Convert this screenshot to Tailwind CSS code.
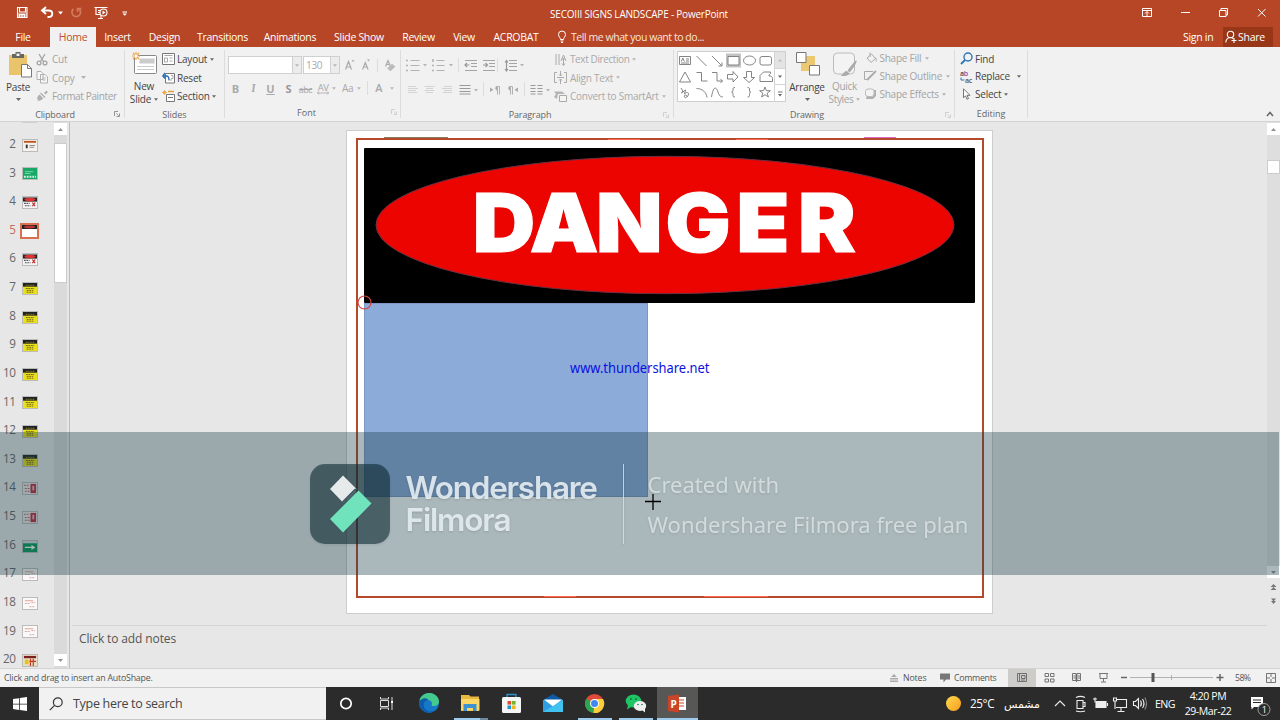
<!DOCTYPE html>
<html lang="en">
<head>
<meta charset="utf-8">
<title>SECOIII SIGNS LANDSCAPE - PowerPoint</title>
<script src="https://cdn.jsdelivr.net/npm/@tailwindcss/browser@4"></script>
</head>
<body class="w-[1280px] h-[720px] overflow-hidden bg-[#e7e7e7] font-['Open_Sans','Noto_Sans',sans-serif] text-[10px] text-[#444] leading-none whitespace-nowrap">
<svg width="0" height="0" class="absolute">
  <defs>
    <symbol id="dn" viewBox="0 0 5 3"><path d="M0 0h5L2.500 3z" fill="currentColor" fill-opacity=".8"/></symbol>
    <symbol id="launch" viewBox="0 0 6 6"><path d="M.5 5V.5H4M2.500 2.500l2 2M5.500 2.500v3h-3" fill="none" stroke="currentColor" stroke-width=".9"/></symbol>
  </defs>
</svg>
<div class="relative flex flex-col w-[1280px] h-[720px]">

  <!-- Title bar -->
  <header class="h-[27px] shrink-0 bg-[#b64626] text-white flex items-center">
    <svg class="w-[140px] h-[27px]" viewBox="0 0 140 27" fill="none" stroke="#fff" stroke-width="1.100">
      <path d="M17.500 7.500h9.500v10h-9.500zM19.500 7.500v4.500h6v-4.500M19.500 17.500v-3h5v3M22 15v2.500"/><path d="M17.500 13h9.500v4.500h-9.500z" stroke="none" fill="#fff" fill-opacity=".45"/>
      <path d="M42.500 10.500h6c5 0 5 6.500 0 6.500h-1M46 7l-4 3.500 4 3.500" stroke-width="1.900"/>
      <path d="M58 11.500h5l-2.500 3z" fill="#fff" stroke="none"/>
      <path d="M73.500 9a4.300 4.300 0 1 0 5.500 0M77.500 12V8.500h4" stroke="#d17a5f" stroke-width="1.700"/>
      <path d="M94.500 7.500h13M96 8v6.500h5M98 10.500h3M98 12.500h2M101 15v3M98 18.500h5"/><circle cx="103.500" cy="12.500" r="3.500"/><path d="M102.500 10.500l3 2-3 2z" fill="#fff" stroke="none"/>
      <path d="M122.500 12h4.500"/><path d="M122.500 13.500h4.500l-2.250 2.300z" fill="#fff" stroke="none"/>
    </svg>
    <div class="w-[998px] text-center text-[10px] tracking-[-0.210px] pt-px">SECOIII SIGNS LANDSCAPE - PowerPoint</div>
    <svg class="w-[142px] h-[27px]" viewBox="1138 0 142 27" fill="none" stroke="#fff" stroke-width="1">
      <path d="M1142.500 8.500h9v8h-9zM1142.500 10.500h9M1147 16v-4M1145 13.500l2-2 2 2"/>
      <path d="M1181 12.500h9"/>
      <path d="M1219.500 10.500h6.500v6h-6.500zM1221 10V8.500h6.500v6.500h-1.500"/>
      <path d="M1258 9l7.500 7.500M1265.500 9l-7.500 7.500"/>
    </svg>
  </header>

  <!-- Ribbon tabs -->
  <nav class="h-[20px] shrink-0 bg-[#b64626] text-white flex items-center text-[10.500px] tracking-[-0.300px]">
    <span class="w-[50px] text-center pr-1">File</span>
    <span class="w-[46px] h-full bg-[#f1f1f1] text-[#c0502f] flex items-center justify-center">Home</span>
    <span class="w-[43px] text-center">Insert</span>
    <span class="w-[51px] text-center">Design</span>
    <span class="w-[65px] text-center">Transitions</span>
    <span class="w-[70px] text-center">Animations</span>
    <span class="w-[68px] text-center">Slide Show</span>
    <span class="w-[51px] text-center">Review</span>
    <span class="w-[40px] text-center">View</span>
    <span class="w-[64px] text-center">ACROBAT</span>
    <svg class="w-[10px] h-[14px] ml-[9px]" viewBox="0 0 10 14" fill="none" stroke="#fff"><path d="M3.500 9.500C3.500 7.500 1.500 7 1.500 4.500a3.500 3.500 0 0 1 7 0c0 2.500-2 3-2 5zM3.500 11h3M4 12.500h2"/></svg>
    <span class="ml-[4px] w-[595px] text-[#fbe4dc] tracking-[-0.440px]">Tell me what you want to do...</span>
    <span class="w-[48px] ml-[17px]">Sign in</span>
    <span class="h-full w-[50px] bg-[#983618] flex items-center pl-[2px] gap-[1px] -ml-[8px] mr-[5px] text-[10.500px] tracking-[-0.250px]">
      <svg class="w-[12px] h-[14px] shrink-0" viewBox="0 0 12 14" fill="none" stroke="#fff" stroke-width="1.100"><circle cx="5.500" cy="4.500" r="3.200"/><path d="M.8 12.500c0-3 2-5 4.700-5 1 0 2 .4 2.700 1M9 8v5M6.500 10.500h5"/></svg>
      Share</span>
  </nav>

  <!-- Ribbon -->
  <section class="h-[75px] shrink-0 bg-[#f1f1f1] border-b border-[#d2d2d2] flex relative">
    <!-- Clipboard -->
    <div class="w-[125px] border-r border-[#dcdcdc] my-[3px] flex flex-col">
      <div class="flex h-[56px]">
        <div class="w-[36px] flex flex-col items-center">
          <svg class="w-[26px] h-[28px] ml-[4px] mt-[1px]" viewBox="0 0 26 28"><path d="M2 4h18v20H2z" fill="#e9c46a"/><path d="M5 3h3.500V1h5v2H17v4H5z" fill="#666"/><path d="M9.500 2.500h3V5h-3z" fill="#f1f1f1"/><path d="M14.500 13.500h6l4 4v8.500h-10z" fill="#fff" stroke="#777"/><path d="M20.500 13.500v4h4" fill="none" stroke="#777"/></svg>
          <span class="mt-[3px] tracking-[-0.300px]">Paste</span>
          <svg class="w-[5px] h-[3px] mt-[6px]"><use href="#dn"/></svg>
        </div>
        <div class="flex flex-col text-[#a3a3a3]">
          <div class="flex h-[18.500px] items-center gap-[4px] tracking-[-0.200px]"><svg class="w-[12px] h-[13px]" viewBox="0 0 12 13" fill="none" stroke="#a3a3a3" stroke-width="1.300"><path d="M3 1l4.500 7.500M9 1L4.500 8.500"/><circle cx="3" cy="10" r="1.900"/><circle cx="9" cy="10" r="1.900"/></svg>Cut</div>
          <div class="flex h-[18.500px] items-center gap-[4px] tracking-[-0.200px]"><svg class="w-[12px] h-[13px]" viewBox="0 0 12 13" fill="#f8f8f8" stroke="#b0b0b0"><path d="M1 .5h4l2 2v6H1zM4.500 3.500H9l2.500 2.500v6h-7zM6.500 7h3M6.500 9h3"/></svg>Copy<svg class="w-[5px] h-[3px] ml-[2px]"><use href="#dn"/></svg></div>
          <div class="flex h-[18.500px] items-center gap-[4px] tracking-[-0.360px]"><svg class="w-[12px] h-[12px]" viewBox="0 0 12 12" fill="#b0b0b0"><path d="M8 3l2.500-2.500L12 2 9.500 4.500zM5 2.500L9.500 7 8.500 8 4 3.500zM3.500 4.500l3.700 3.700C6 10 4 11 1.500 11L2.500 9 1 9.500C1 7.500 2 5.500 3.500 4.500z"/></svg>Format Painter</div>
        </div>
      </div>
      <div class="flex items-center h-[17px] pt-[4px] text-[9px] text-[#666]"><span class="w-[110px] text-center tracking-[-0.120px]">Clipboard</span><svg class="w-[6px] h-[6px] ml-[4px] text-[#888]"><use href="#launch"/></svg></div>
    </div>
    <!-- Slides -->
    <div class="w-[100px] border-r border-[#dcdcdc] my-[3px] flex flex-col">
      <div class="flex h-[56px]">
        <div class="w-[38px] flex flex-col items-center leading-[13px]">
          <svg class="w-[27px] h-[25px] mt-px" viewBox="0 0 27 25"><rect x="3.500" y="4.500" width="22" height="18" rx="1" fill="#fff" stroke="#888"/><path d="M9 8h14v4H9zM6 15.500h17M6 18.500h17" fill="#ccc" stroke="#ccc" stroke-width="1.200"/><path d="M5 1v8M1 5h8M2 2l6 6M8 2L2 8" stroke="#e8a33c" stroke-width="1.200"/><circle cx="5" cy="5" r="1.700" fill="#fff"/></svg>
          <span class="mt-[4px] tracking-[-0.200px]">New</span>
          <span class="flex items-center gap-[3px] tracking-[-0.200px]">Slide<svg class="w-[4px] h-[3px]"><use href="#dn"/></svg></span>
        </div>
        <div class="flex flex-col tracking-[-0.220px] -ml-px">
          <div class="flex h-[18.500px] items-center gap-[2px]"><svg class="w-[13px] h-[12px]" viewBox="0 0 13 12" fill="#fff" stroke="#777"><path d="M.5.500h12v11H.500z"/><path d="M2.500 2.500h8M2.500 5h3v4h-3zM7.500 5h3M7.500 8h3" stroke="#aaa"/></svg>Layout<svg class="w-[4px] h-[3px] ml-px"><use href="#dn"/></svg></div>
          <div class="flex h-[18.500px] items-center gap-[2px]"><svg class="w-[13px] h-[12px]" viewBox="0 0 13 12" fill="#fff" stroke="#777"><path d="M3.500 1.500h9v9.500h-9z"/><path d="M6 8h4M9 3.500h2v3H9" stroke="#aaa"/><path d="M1 4h3.500c2 0 2.500 2 2.500 4M3 1L.8 4 3 6.500" fill="none" stroke="#2b6cb0" stroke-width="1.300"/></svg>Reset</div>
          <div class="flex h-[18.500px] items-center gap-[2px]"><svg class="w-[13px] h-[12px]" viewBox="0 0 13 12" fill="#fff" stroke="#777"><path d="M4.500 4.500h8v7h-8zM6 7.500h5"/><path d="M6 1.500h6" stroke="#e0a23c" stroke-width="1.500"/><path d="M2.500 0v5M0 2.500h5M1 1l3 3M4 1L1 4" stroke="#e8a33c" stroke-width=".8"/></svg>Section<svg class="w-[4px] h-[3px]"><use href="#dn"/></svg></div>
        </div>
      </div>
      <div class="h-[17px] pt-[4px] flex items-center justify-center text-[9px] text-[#666]">Slides</div>
    </div>
    <!-- Font -->
    <div class="w-[176px] border-r border-[#dcdcdc] my-[3px] flex flex-col text-[#a9a9a9]">
      <div class="flex h-[31px] pt-[2px] items-center pl-[3px]">
        <div class="w-[65px] h-[18px] bg-white border border-[#d0d0d0]"></div>
        <div class="w-[9px] h-[18px] bg-[#ececec] border-y border-r border-[#d0d0d0] flex items-center justify-center"><svg class="w-[4px] h-[3px]"><use href="#dn"/></svg></div>
        <div class="w-[28px] h-[18px] bg-white border border-[#d0d0d0] ml-px pl-[2px] flex items-center text-[10px] tracking-[-0.300px]">130</div>
        <div class="w-[9px] h-[18px] bg-[#ececec] border-y border-r border-[#d0d0d0] flex items-center justify-center"><svg class="w-[4px] h-[3px]"><use href="#dn"/></svg></div>
        <svg class="w-[56px] h-[20px] ml-px" viewBox="341 0 56 20" fill="none" stroke="#aaa" stroke-width="1.200"><path d="M345.500 14.500l3-8 3 8M346.500 12h4M362.500 14.500l2.800-7 2.800 7M363.500 12h3.700M385.500 11.500l2.500-6 2.500 6M386.500 9.500h3"/><path d="M351.500 6.500l1.500-2 1.500 2zM367 4.500h3l-1.500 2z" fill="#aaa" stroke="none"/><path d="M388 13.500l4-4 2.500 2-4 4z" fill="#bbb" stroke="#bbb"/><path d="M377.500 4v13" stroke="#ddd"/></svg>
      </div>
      <div class="flex h-[25px] items-start pt-[3px] text-[11px]">
        <b class="w-[21px] text-center pt-px">B</b><i class="w-[15px] text-center font-serif font-bold pt-px">I</i><span class="w-[19px] text-center font-bold underline pt-px">U</span><b class="w-[17px] text-center pt-px text-[#999]">S</b><span class="w-[17px] text-center text-[9px] tracking-[-0.500px] line-through pt-[3px]">abc</span><span class="w-[18px] flex flex-col items-center text-[9.500px] tracking-[-0.500px] pt-px">AV<svg class="w-[12px] h-[4px] -mt-px" viewBox="0 0 12 4" fill="none" stroke="#aaa" stroke-width=".8"><path d="M0 2h12M2 .5L.5 2 2 3.500M10 .5L11.500 2 10 3.500"/></svg></span><svg class="w-[4px] h-[3px] mt-[5px]"><use href="#dn"/></svg><span class="w-[21px] text-center text-[10px] tracking-[-0.400px] pl-[2px] pt-px">Aa</span><svg class="w-[4px] h-[3px] mt-[5px]"><use href="#dn"/></svg><span class="w-px h-[14px] bg-[#ddd] ml-[6px] -mt-px"></span><span class="w-[22px] text-center font-semibold">A</span><svg class="w-[4px] h-[3px] mt-[5px]"><use href="#dn"/></svg>
      </div>
      <div class="flex items-center h-[17px] pt-[4px] text-[9px] text-[#666]"><span class="w-[163px] text-center">Font</span><svg class="w-[6px] h-[6px] ml-[3px] text-[#ccc]"><use href="#launch"/></svg></div>
    </div>
    <!-- Paragraph -->
    <div class="w-[273px] border-r border-[#dcdcdc] my-[3px] flex flex-col text-[#a9a9a9]">
      <div class="flex h-[56px]">
        <svg class="w-[153px] h-[56px] shrink-0" viewBox="401 50 153 56" fill="none" stroke="#b2b2b2" stroke-width="1">
          <path d="M410.500 60.500h9M410.500 65.500h9M410.500 70.500h9M436.500 60.500h8M436.500 65.500h8M436.500 70.500h8"/><path d="M406 60.500h2M406 65.500h2M406 70.500h2M433 59v3M432 65.500h2M432 70.500h2" stroke-width="1.600"/>
          <path d="M458.500 58v14M497.500 58v14M483.500 82v14M524.500 82v14" stroke="#ddd"/>
          <path d="M465 60.500h12M471 63.500h6M471 66.500h6M465 70.500h12M483 60.500h12M489 63.500h6M489 66.500h6M483 70.500h12M509 60.500h8M509 63.500h8M509 66.500h8M509 70.500h8" stroke="#a5a5a5"/><path d="M469.500 65H465M467 63l-2 2 2 2M483 65h4.500M485.500 63l2 2-2 2M506.500 61v10M505 62.500l1.500-2 1.500 2M505 69l1.500 2 1.500-2" stroke="#999" stroke-width="1.200"/>
          <path d="M408 86.500h8M408 88.500h10M408 90.500h8M408 92.500h9M424.500 86.500h10M426 88.500h7M424.500 90.500h10M426 92.500h7M444 86.500h8M442 88.500h10M444 90.500h8M443 92.500h9" stroke="#d3d3d3"/><path d="M459.500 85.500h11M459.500 88.500h11M459.500 91.500h11M459.500 94h11M530.500 85.500h5M537.500 85.500h5M530.500 88.500h5M537.500 88.500h5M530.500 91.500h5M537.500 91.500h5M530.500 94h5M537.500 94h5" stroke="#999"/>
          <path d="M490 87.500l3.500 2.200-3.500 2.200zM518 87.500l-3.500 2.200 3.500 2.200zM497.500 90.500a2.200 2.200 0 0 1 0-4.500zM510.500 90.500a2.200 2.200 0 0 1 0-4.500z" fill="#aaa" stroke="none"/><path d="M497.500 86v8.500M499.500 94.500V86.500h-3M510.500 86v8.500M512.500 94.500V86.500h-3"/>
          <g fill="#b5b5b5" stroke="none"><path d="M423 64h4l-2 2.500zM449 64h4l-2 2.500zM520 64h4l-2 2.500zM474 89h4l-2 2.500zM546 89h4l-2 2.500z"/></g>
        </svg>
        <div class="flex flex-col tracking-[-0.250px]">
          <div class="flex h-[18.500px] items-center gap-[3px] tracking-[-0.400px]"><svg class="w-[13px] h-[13px]" viewBox="0 0 13 13" fill="none" stroke="#aaa"><path d="M2 1v11M5 1v11M9.500 12V5M7 8l2.500-6L12 8M8 6h3M8 10.500l1.500 2 1.500-2"/></svg>Text Direction<svg class="w-[4px] h-[3px]"><use href="#dn"/></svg></div>
          <div class="flex h-[18.500px] items-center gap-[3px]"><svg class="w-[13px] h-[13px]" viewBox="0 0 13 13" fill="none" stroke="#aaa"><path d="M3 1.500H.5v10H3M10 1.500h2.500v10H10M3 6.500h7M6.500 0v5M6.500 8v5M5 3.500l1.500 1.500L8 3.500M5 9.500L6.500 8 8 9.500"/></svg>Align Text<svg class="w-[4px] h-[3px]"><use href="#dn"/></svg></div>
          <div class="flex h-[18.500px] items-center gap-[3px]"><svg class="w-[13px] h-[13px]" viewBox="0 0 13 13" fill="none" stroke="#aaa"><path d="M0 1.500h8l3 2.500H4L3 9 0 7l2-3z" fill="#b5b5b5" stroke="none"/><path d="M5.500 5.500h7v6h-7z" fill="#f4f4f4"/></svg>Convert to SmartArt<svg class="w-[4px] h-[3px]"><use href="#dn"/></svg></div>
        </div>
      </div>
      <div class="flex items-center h-[17px] pt-[4px] text-[9px] text-[#666]"><span class="w-[258px] text-center tracking-[-0.120px]">Paragraph</span><svg class="w-[6px] h-[6px] ml-[4px] text-[#ccc]"><use href="#launch"/></svg></div>
    </div>
    <!-- Drawing -->
    <div class="w-[281px] border-r border-[#dcdcdc] my-[3px] flex flex-col">
      <div class="flex h-[56px]">
        <svg class="w-[110px] h-[53px] ml-[3px] shrink-0" viewBox="677 50 110 53" fill="none" stroke="#777" stroke-width=".9">
          <path d="M677.500 51.500h108v50h-108z" fill="#fff" stroke="#c8c8c8"/><path d="M775 52h10v16h-10z" fill="#e4e4e4" stroke="none"/><path d="M774.500 52v50M775 68.500h10M775 84.500h10" stroke="#d0d0d0"/>
          <path d="M679.500 56.500h11v8h-11zM686 59h3M686 61h3M681 63h8M681.300 61.500l1.500-3.500 1.500 3.500"/>
          <path d="M696.500 56l10 10M712 56l9.500 9.500M722 62.500v3.500h-3.500"/>
          <path d="M726 53.500h15v14h-15z" fill="#c3c3c3" stroke="none"/><path d="M728 56.500h11v8.500h-11z" fill="#fff"/>
          <ellipse cx="749.500" cy="60.500" rx="6" ry="4.500"/><rect x="760" y="56.500" width="11.500" height="8.500" rx="2"/>
          <path d="M679.500 82l5.500-10 5.500 10zM696.500 72.500h5v8.500h6M712 72.500h5v8.500h5.500M720.500 79l2 2-2 2"/>
          <path d="M727.500 74.500h5.500v-3l5 5.500-5 5v-3h-5.500zM746.500 71.500h5v6h3l-5.500 5-5.500-5h3z"/>
          <path d="M760 81.500v-6l3.500-3.500h7c1 2-2 2-1.500 4 2 0 3.500.5 3.500 2.500v3z"/>
          <path d="M681 88l2 3-1.500 2 4-3-1 4c2-2 4-2 4 0s-3 5-4 3 2-3 3 0M696.500 88.500c6 0 10 4 10.500 9M711.500 97c2-12 5-10 6.500-5s4 5.500 5 4.500"/>
          <path d="M735 87.500c-2 0-2 .5-2 2.500s-.5 2-1.500 2.200c1 .2 1.500.3 1.500 2.300s0 2.500 2 2.500M747.500 87.500c2 0 2 .5 2 2.500s.5 2 1.500 2.200c-1 .2-1.500.3-1.500 2.300s0 2.500-2 2.500"/>
          <path d="M765 87l1.400 3.700h4l-3.200 2.500 1.200 3.800-3.400-2.300-3.400 2.300 1.200-3.800-3.200-2.500h4z"/>
          <path d="M778 61.500h4l-2-2.500z" fill="#bbb" stroke="none"/><path d="M778 75.500h4l-2 2.500zM778 94h4l-2 2.500z" fill="#666" stroke="none"/><path d="M778 92h4.500" stroke="#666"/>
        </svg>
        <div class="w-[40px] flex flex-col items-center">
          <svg class="w-[26px] h-[27px] mt-px" viewBox="0 0 26 27"><path d="M12 5h9v9h-9zM7 12h8v8H7z" fill="#ecc873"/><path d="M2.500 1.500h9.500v10h-9.500zM15.500 14.500H25.500v9.500h-10z" fill="#fff" stroke="#777"/></svg>
          <span class="mt-[4px] tracking-[-0.250px]">Arrange</span><svg class="w-[5px] h-[3px] mt-[6px]"><use href="#dn"/></svg>
        </div>
        <div class="w-[35px] flex flex-col items-center text-[#a3a3a3] leading-[13px]">
          <svg class="w-[26px] h-[26px] mt-px" viewBox="0 0 26 26"><rect x="1.500" y="2" width="21" height="21" rx="4" fill="#f3f3f3" stroke="#bbb"/><path d="M24.500 9.500c1 1-3 8-7 12l-2-2c3-4 8-11 9-10zM15 20l2.500 2.500c-2 3-5 2.500-9 2.500 3-1.500 3-5 6.500-5z" fill="#aaa"/></svg>
          <span class="mt-[3px] tracking-[-0.250px]">Quick</span><span class="flex items-center gap-[3px] tracking-[-0.350px]">Styles<svg class="w-[4px] h-[3px]"><use href="#dn"/></svg></span>
        </div>
        <div class="flex flex-col text-[#a3a3a3] pl-[2px] tracking-[-0.250px] -mt-px">
          <div class="flex h-[18px] items-center gap-[2.500px]"><svg class="w-[13px] h-[12px]" viewBox="0 0 13 12" fill="none" stroke="#aaa"><path d="M3 6l4.500-4 4 4.500-4.500 4zM6 5V.5M11.500 5.500c1 2 1 3 .5 4"/></svg>Shape Fill<svg class="w-[4px] h-[3px] ml-[1px]"><use href="#dn"/></svg></div>
          <div class="flex h-[18px] items-center gap-[2.500px]"><svg class="w-[13px] h-[12px]" viewBox="0 0 13 12" fill="none" stroke="#aaa"><path d="M9 1.500H.5v8H3"/><path d="M12 1L5 8l-2 2" stroke-width="1.800"/></svg>Shape Outline<svg class="w-[4px] h-[3px] ml-[1px]"><use href="#dn"/></svg></div>
          <div class="flex h-[18px] items-center gap-[2.500px]"><svg class="w-[13px] h-[12px]" viewBox="0 0 13 12"><path d="M4 2h8v6l-3 3H2z" fill="#b0b0b0"/><rect x="1.500" y="1" width="8.500" height="7.500" rx="2.500" fill="#f3f3f3" stroke="#bbb"/></svg>Shape Effects<svg class="w-[4px] h-[3px] ml-[1px]"><use href="#dn"/></svg></div>
        </div>
      </div>
      <div class="flex items-center h-[17px] pt-[4px] text-[9px] text-[#666]"><span class="w-[266px] text-center tracking-[-0.120px]">Drawing</span><svg class="w-[6px] h-[6px] ml-[5px] text-[#ccc]"><use href="#launch"/></svg></div>
    </div>
    <!-- Editing -->
    <div class="w-[73px] border-r border-[#dcdcdc] my-[3px] flex flex-col">
      <div class="flex flex-col h-[56px] pl-[5px] tracking-[-0.230px]">
        <div class="flex h-[17px] items-center gap-[2px]"><svg class="w-[13px] h-[13px]" viewBox="0 0 13 13" fill="none" stroke="#2e75b6"><circle cx="8" cy="5" r="4" stroke-width="1.400"/><path d="M5 8L1 12" stroke-width="1.800"/></svg>Find</div>
        <div class="flex h-[18px] items-center gap-[2px]"><svg class="w-[13px] h-[15px]" viewBox="0 0 13 15" font-weight="600" font-size="7"><text x="0" y="6.500" fill="#444">a<tspan fill="#8a4bb5">b</tspan></text><text x="5" y="13.500" fill="#555">ac</text><path d="M1 8.500v2.500h3.500" fill="none" stroke="#2e75b6"/></svg>Replace<svg class="w-[4px] h-[3px] ml-[5px]"><use href="#dn"/></svg></div>
        <div class="flex h-[18px] items-center gap-[2px]"><svg class="w-[13px] h-[12px]" viewBox="0 0 13 12" fill="#fff" stroke="#666" stroke-width=".9"><path d="M3.500.8v9l2-2 1.500 3.500 1.500-.7L7 7.300h3z"/></svg>Select<svg class="w-[4px] h-[3px] ml-px"><use href="#dn"/></svg></div>
      </div>
      <div class="h-[17px] pt-[6px] flex items-center justify-center text-[9px] text-[#666]">Editing</div>
    </div>
    <div class="flex-1 flex items-end justify-end pr-[6px] pb-[4px]"><svg class="w-[8px] h-[6px]" viewBox="0 0 8 6" fill="none" stroke="#666" stroke-width="1.500"><path d="M1 5l3-3.500L7 5"/></svg></div>
  </section>

  <!-- Workspace -->
  <main class="h-[546px] shrink-0 flex">
    <div class="w-[54px] h-full overflow-hidden flex flex-col">
      <div class="h-[9px] shrink-0 pl-[22px]"><div class="w-[15px] h-px bg-[#d0d0d0]"></div></div>
      <div id="thumbs" class="flex flex-col"></div>
    </div>
    <div class="w-[13px] h-full bg-[#dadada] flex flex-col justify-between">
      <div class="flex flex-col"><div class="h-[12px] mt-px bg-white flex items-center justify-center"><svg class="w-[5px] h-[3px] rotate-180 text-[#777]"><use href="#dn"/></svg></div><div class="h-[140px] mt-[8px] bg-white border border-[#ccc]"></div></div>
      <div class="h-[12px] mb-[2px] bg-white flex items-center justify-center"><svg class="w-[5px] h-[3px] text-[#777]"><use href="#dn"/></svg></div>
    </div>
    <div class="w-[3px] border-r border-[#bdbdbd]"></div>
    <div class="w-[1197px] flex flex-col">
      <div class="h-[503px] relative">
        <div class="absolute left-[276px] top-[8px] w-[647px] h-[484px] bg-white border border-[#cdcdcd]">
          <svg class="w-[645px] h-[482px]" viewBox="347 131 645 482">
            <rect x="357" y="139" width="626" height="458" fill="none" stroke="#b54a2a" stroke-width="2"/>
            <path d="M384 137.500h64" stroke="#8a7b62" stroke-width="1"/><path d="M608 139.500h32M736 139.500h32M544 596.500h32M704 596.500h64" stroke="#ff6a50" stroke-width="1"/><path d="M864 137.500h32" stroke="#d86ac0" stroke-width="1"/>
            <rect x="364" y="148" width="611" height="155" rx="1" fill="#000"/>
            <ellipse cx="665" cy="225" rx="289" ry="68.700" fill="#eb0400" stroke="#6b3040" stroke-width="1"/>
            <text transform="scale(1.060 1)" x="446 499.800 562.300 627.800 694.800 752.800" y="252.500" font-family="Inter, 'Liberation Sans', sans-serif" font-weight="900" font-size="81.500" fill="#fff" stroke="#fff" stroke-width="1.200">DANGER</text>
            <rect x="364.500" y="303.500" width="283" height="193" fill="#8cabd9" stroke="#7c98c2"/>
            <circle cx="364.500" cy="302.500" r="6.500" fill="none" stroke="#d2453c" stroke-width="1.200"/>
          </svg>
        </div>
      </div>
      <div class="flex-1 ml-[2px] border-t border-[#d4d4d4] pl-[7px] pt-[7px] text-[12px] tracking-[-0.120px] text-[#555]">Click to add notes</div>
    </div>
    <div class="w-[13px] h-full flex flex-col items-center text-[#777]">
      <div class="w-full h-[456px] bg-[#dedede] flex flex-col"><div class="h-[12px] mt-px bg-white flex items-center justify-center"><svg class="w-[5px] h-[3px] rotate-180"><use href="#dn"/></svg></div><div class="h-[14px] mt-[25px] bg-white border border-[#ccc]"></div><div class="h-[12px] mt-auto bg-white flex items-center justify-center"><svg class="w-[5px] h-[3px]"><use href="#dn"/></svg></div></div>
      <svg class="w-[7px] h-[24px] mt-[6px]" viewBox="0 0 7 24" fill="#777"><path d="M3.500 0L6.500 3h-6zM3.500 3L6.500 6h-6zM1 17h5l-2.500 3zM1 14.500h5l-2.500 3z"/></svg>
    </div>
  </main>

  <!-- Status bar -->
  <footer class="h-[19px] shrink-0 bg-[#f1f1f1] border-t border-[#d4d4d4] flex items-center text-[8.800px] text-[#555]">
    <span class="w-[889px] pl-[4px] tracking-[-0.200px]">Click and drag to insert an AutoShape.</span>
    <svg class="w-[10px] h-[10px]" viewBox="0 0 10 10" fill="#aaa"><path d="M5 1l3 3H2zM1 5h8v1.500H1zM1 7.500h8V9H1z"/></svg>
    <span class="w-[37px] pl-[4px] tracking-[-0.150px]">Notes</span>
    <svg class="w-[10px] h-[10px] ml-[4px]" viewBox="0 0 10 10" fill="#777"><path d="M0 .5h10v6H6L3.500 9.500V6.500H0z"/></svg>
    <span class="w-[58px] pl-[4px] tracking-[-0.300px]">Comments</span>
    <svg class="w-[272px] h-[18px]" viewBox="1008 669 272 18" fill="none" stroke="#666" stroke-width=".9">
      <path d="M1008 669h28v18h-28z" fill="#cdccc9" stroke="none"/>
      <path d="M1017.500 673.500h9v8h-9zM1019.500 674v7M1021.500 675.500h3.500v3h-3.500zM1021 680h4"/>
      <path d="M1045 673.500h3.500v3H1045zM1050.500 673.500h3.500v3h-3.500zM1045 679h3.500v3H1045zM1050.500 679h3.500v3h-3.500z"/>
      <path d="M1072.500 673.500h3.500v7h-3.500zM1077 673.500h3.500v7h-3.500zM1076.500 674v8M1073.500 676h2M1073.500 678h2M1078 676h2M1078 678h2"/>
      <path d="M1099 673.500h9M1100 674v4.500h7V674M1103.500 679v2.500M1101 682h5"/>
      <path d="M1121 677.500h6" stroke-width="1.500"/><path d="M1130 677.500h83M1171.500 675v5" stroke="#aaa"/><path d="M1151.500 673h3v9h-3z" fill="#555" stroke="none"/><path d="M1216.500 677.500h7M1220 674v7" stroke-width="1.500"/>
      <path d="M1266.500 673.500h9v9h-9zM1271 674v3M1271 679v3M1267 678h3M1272 678h3"/>
      <text x="1235" y="681" font-size="8.700" fill="#555" stroke="none" textLength="16">58%</text>
    </svg>
  </footer>

  <!-- Windows taskbar -->
  <div class="h-[33px] shrink-0 bg-[#2a2b2a] text-white flex">
    <div class="w-[39px] flex items-center justify-center"><svg class="w-[14px] h-[14px]" viewBox="0 0 14 14" fill="#fff"><path d="M0 2l6-.8v5.500H0zM6.800 1L14 0v6.700H6.800zM0 7.400h6v5.500L0 12zM6.800 7.400H14V14l-7.200-1z"/></svg></div>
    <div class="w-[287px] bg-[#f1f1f1] border-t border-b border-[#c8c8c8] flex items-center text-[#444]">
      <svg class="w-[14px] h-[14px] ml-[10px]" viewBox="0 0 14 14" fill="none" stroke="#333" stroke-width="1.200"><circle cx="8.800" cy="5.200" r="4.400"/><path d="M5.600 8.400L.8 13.200"/></svg>
      <span class="ml-[10px] pt-px text-[12.500px] tracking-[-0.300px]">Type here to search</span>
    </div>
    <svg class="w-[614px] h-[33px]" viewBox="326 687 614 33">
      <circle cx="346" cy="703.500" r="5.200" fill="none" stroke="#fff" stroke-width="1.700"/>
      <path d="M380.500 697v2h8v-2M380.500 710v-2h8v2M380.500 700.500h8v6h-8zM392 697v13" fill="none" stroke="#ddd" stroke-width="1"/><path d="M391 701h2v2h-2z" fill="#fff"/>
      <circle cx="429" cy="703" r="10" fill="#1679c8"/><path d="M419.500 700c2-6 8-8 13-6.500 5 1.600 7 6 6.400 9-.6 3-4 4-7.400 3.500 1.500-3-.5-6-3.500-6-4 0-6 3-8.500 0z" fill="#44ca8c"/><path d="M419 702c2-4 7-5 9.500-2-4 0-6 4-4 8 2 3.500 7 4.500 11 2-4 5-15 4-16.500-8z" fill="#0d5bab"/>
      <path d="M461 695h8l1.500 1.500H479V711h-18z" fill="#e9b93f"/><path d="M461 699h18.500v11.500H461z" fill="#fbd768"/><path d="M463.500 704h13v7h-3.500v-3h-6v3h-3.500z" fill="#3d93d1"/>
      <rect x="502" y="697" width="19" height="16" rx="1.500" fill="#f5f5f5"/><path d="M507 697v-2.500h9v2.500" fill="none" stroke="#2b93d3" stroke-width="1.300"/><path d="M507.500 701h3.600v3.600h-3.600z" fill="#e6492d"/><path d="M512 701h3.600v3.600H512z" fill="#71b52b"/><path d="M507.500 705.500h3.600v3.600h-3.600z" fill="#1c93d6"/><path d="M512 705.500h3.600v3.600H512z" fill="#f3b51e"/>
      <path d="M543 700l10-6 10 6v12h-20z" fill="#0d5aa7"/><path d="M543 700h20v12h-20z" fill="#2f9fe3"/><path d="M544 699.500h18l-9 7z" fill="#fff"/><path d="M543 712l20-12v12z" fill="#42c2f0"/>
      <circle cx="594.500" cy="703.500" r="9.500" fill="#e04a3a"/><path d="M594.500 703.500l-8.200-4.800a9.500 9.500 0 0 0 7 14.200l5-8z" fill="#2da652"/><path d="M594.500 703.500v-4.500h8.500a9.500 9.500 0 0 1-9.500 14z" fill="#fccf3a"/><circle cx="594.500" cy="703.500" r="4.500" fill="#fff"/><circle cx="594.500" cy="703.500" r="3.500" fill="#4286f0"/>
      <ellipse cx="633.500" cy="701" rx="7.800" ry="6.500" fill="#1fc464"/><path d="M628 705l-1 4.500 5-3z" fill="#1fc464"/><ellipse cx="640" cy="706" rx="6.200" ry="5" fill="#efefef"/><path d="M642 710l3 2.500v-4z" fill="#efefef"/><g fill="#167c40"><circle cx="631" cy="699" r="1"/><circle cx="636" cy="699" r="1"/><circle cx="638" cy="704.500" r=".8"/><circle cx="642" cy="704.500" r=".8"/></g>
      <path d="M657 687h41v33h-41z" fill="#575756"/><path d="M676 697h10v13h-10z" fill="#fff"/><path d="M679 700h5M679 703h5M679 706h5" stroke="#c84627" stroke-width="1.200"/><path d="M668 696l11-1.500v18l-11-1.500z" fill="#c84627"/><text x="670.500" y="707.500" font-size="10" font-weight="700" fill="#fff">P</text>
      <path d="M454 718h26v2h-26zM578 718h34v2h-34zM619 718h34v2h-34zM657 718h41v2h-41z" fill="#9ccbee"/><path d="M480 718h8v2h-8z" fill="#6d8ba0"/>
    </svg>
    <div class="flex items-center w-[340px] text-[11.700px]">
      <div class="w-[15px] h-[15px] rounded-full bg-linear-to-br from-[#ffdb4d] to-[#f79a1c] ml-[6px]"></div>
      <span class="ml-[9px] w-[26px] pt-px tracking-[-0.400px]">25°C</span>
      <span class="ml-[6px] w-[38px] pt-px text-[11px] font-['DejaVu_Sans',sans-serif]" dir="rtl">مشمس</span>
      <svg class="w-[96px] h-[33px] ml-[13px]" viewBox="1053 687 96 33" fill="none" stroke="#eee" stroke-width="1.100">
        <path d="M1055 706l5-5 5 5"/>
        <path d="M1077 700.500h6v8h-6zM1083 702.500h2v4h-2M1076 697.500c3-1.500 6-1.500 9 0M1076 711c3 1 6 1 9 0"/>
        <path d="M1096 701.500h10v6h-10z" fill="#eee"/><path d="M1093 699h4M1095 697.500v5M1107.500 703v3"/>
        <path d="M1116 699.500h10.500v8H1116M1121 708v3M1117.500 711.500h7M1113.500 698h3v3h-3zM1115 701v8"/>
        <path d="M1133.500 701.500h2l3-3v10l-3-3h-2zM1140.500 700.500c1.200 2 1.200 4 0 6M1142.500 699c2 3 2 6 0 9" /><path d="M1144.800 697.500c2.300 4 2.300 8 0 12" stroke="#888"/>
      </svg>
      <span class="ml-[6px] w-[22px] pt-px text-[10.700px] tracking-[-0.650px]">ENG</span>
      <div class="w-[62px] text-center text-[10.500px] leading-[14.500px] tracking-[-0.400px]">4:20 PM<br>29-Mar-22</div>
      <svg class="w-[24px] h-[33px] ml-[12px]" viewBox="1247 687 24 33"><path d="M1247 697h12v10h-9l-2.500 2.500V707h-.5z" fill="#fff"/><path d="M1249 700h8M1249 702.500h8" stroke="#2a2b2a"/><circle cx="1260" cy="709.500" r="6" fill="#2a2b2a" stroke="#aaa" stroke-width=".9"/><text x="1257.700" y="713" font-size="9" fill="#fff">1</text></svg>
    </div>
  </div>

  <!-- Video watermark band -->
  <div class="absolute left-0 top-[432px] w-[1279px] h-[143px] bg-[#193c44]/[0.365]">
    <svg class="w-full h-full drop-shadow-[0_1px_1px_rgba(0,0,0,0.15)]" viewBox="0 432 1279 143">
      <rect x="310" y="464" width="80" height="80" rx="15" fill="#0a2833" fill-opacity=".57"/>
      <path d="M343 475.500l13.500 13.500L343 502.500 330 489z" fill="#e6eaeb"/><path d="M358.500 490.500l13 13L343 532.500 330 519z" fill="#70e3bd"/>
      <path d="M343 502.500v-1l12-12h2.500" fill="none" stroke="#35525d" stroke-width="1.500"/>
      <g font-family="Inter, sans-serif" font-weight="600" font-size="31.500" fill="#e3ecf1" fill-opacity=".92"><text x="405.500" y="499" textLength="192.500">Wondershare</text><text x="405.500" y="531" textLength="106">Filmora</text></g>
      <path d="M623.500 464v80" stroke="#dfe5e6" stroke-opacity=".8"/>
      <g font-family="'Noto Sans', sans-serif" font-size="22.500" fill="#e4ebec" fill-opacity=".72"><text x="647.500" y="493" textLength="131.500" lengthAdjust="spacingAndGlyphs">Created with</text><text x="647.500" y="533" textLength="321" lengthAdjust="spacingAndGlyphs">Wondershare Filmora free plan</text></g>
    </svg>
  </div>
  <svg class="absolute left-[644px] top-[493px] w-[18px] h-[18px]" viewBox="0 0 18 18" stroke="#000" stroke-width="1.300"><path d="M9 1v16M1 8.500h16"/></svg>
  <svg class="absolute left-[550px] top-[345px] w-[180px] h-[46px]" viewBox="550 345 180 46"><text x="570" y="372.500" font-family="'Noto Sans',sans-serif" font-size="13.700" fill="#0a10e0" textLength="139.500" lengthAdjust="spacingAndGlyphs">www.thundershare.net</text></svg>
</div>
<script>
// Slide thumbnails: background and inner marks for each slide number
const yellow = '<rect width="15" height="12" fill="#e9df1c"/><path d="M0 0h15v4H0z" fill="#222"/><path d="M3 2.500h9" stroke="#ddd733" stroke-width=".8" stroke-dasharray="1 1"/><path d="M3 6h9M4 8h7M4 10h7" stroke="#6b6415" stroke-width="1" stroke-dasharray="2 .7"/>';
const red = '<rect width="15" height="12" fill="#f5f3f3"/><path d="M0 .5h15v4.500H0z" fill="#222"/><ellipse cx="7.500" cy="2.800" rx="6" ry="2" fill="#d33"/><path d="M1 7h6M2 9.500h6" stroke="#555" stroke-width="1.200" stroke-dasharray="2 .7"/><path d="M10 6l3 4M13 6l-3 4" stroke="#b33" stroke-width="1.300"/>';
const stop = '<rect width="15" height="12" fill="#ede8e8"/><path d="M8 1h6v10H8z" fill="#c02d40"/><path d="M10 3h2v5h-2z" fill="#e9b4bb"/><path d="M1 2.500h6M2 6h5M2 9h5" stroke="#b0585f" stroke-dasharray="2 1"/>';
const pale = '<rect width="15" height="12" fill="#fbf8f8"/><path d="M2 3h9" stroke="#e79a8b"/><path d="M2 6h6M9 5h4M7 9.500h5" stroke="#c8a0a8" stroke-dasharray="2 1"/>';
const art = {
  2: '<rect width="15" height="12" fill="#f4f1ee"/><path d="M1 1h13v2H1z" fill="#c4551d"/><path d="M3 5h2v4H3z" fill="#333"/><path d="M7 6h6M7 8h5" stroke="#888"/>',
  3: '<rect width="15" height="12" fill="#16a864"/><path d="M2 4h9M2 6h6" stroke="#7cd9ac"/><path d="M1 9.500h13" stroke="#d6f2e2" stroke-width="2" stroke-dasharray="2 1"/>',
  4: red, 5: '<rect width="15" height="12" fill="#fff"/><path d="M0 0h15v4H0z" fill="#222"/><ellipse cx="7.500" cy="2" rx="5.500" ry="1.400" fill="#b33"/>', 6: red,
  7: yellow, 8: yellow, 9: yellow, 10: yellow, 11: yellow, 12: yellow, 13: yellow, 14: stop, 15: stop,
  16: '<rect width="15" height="12" fill="#0a9a5b"/><path d="M0 0h15v2.500H0z" fill="#d5ddd9"/><path d="M2 7h9M9 5l3 2-3 2" stroke="#fff" stroke-width="1.300" fill="none"/>',
  17: pale, 18: pale, 19: pale,
  20: '<rect width="15" height="12" fill="#e8dfc0"/><path d="M1 1h13v2.500H1z" fill="#7a2020"/><path d="M2 5h4v5H2z" fill="#e2c51a"/><path d="M8 4v8M11 4v8M7 7h7" stroke="#c23b30" stroke-width="1.300"/>'
};
let rows = '';
for (let n = 2; n <= 20; n++) {
  const on = n === 5;
  rows += `<div class="h-[28.640px] shrink-0 flex items-center"><span class="w-[15.500px] pb-[3px] text-right text-[11.700px] tracking-[-0.400px] ${on ? 'text-[#c96a58]' : 'text-[#666]'}">${n}</span><svg class="${on ? 'ml-[4.500px] w-[19px] h-[16px] border-2 border-[#d9704f]' : 'ml-[6px] w-[16px] h-[13px] border border-[#bbb]'}" viewBox="0 0 15 12" preserveAspectRatio="none">${art[n]}</svg></div>`;
}
document.getElementById('thumbs').innerHTML = rows;
</script>
</body>
</html>
